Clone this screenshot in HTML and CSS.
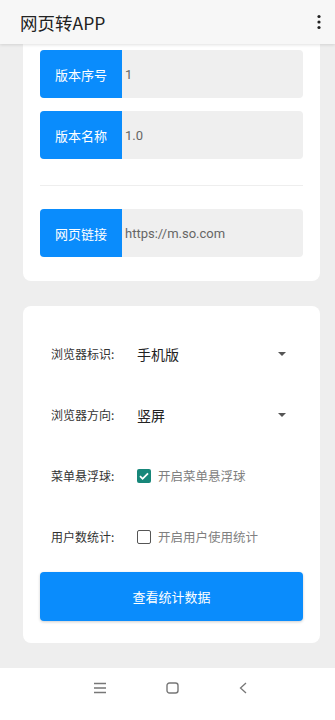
FILE: index.html
```html
<!DOCTYPE html>
<html lang="zh">
<head>
    <meta charset="UTF-8">
    <meta name="viewport" content="width=device-width, initial-scale=1.0">
    <title>网页转APP</title>
    <link rel="stylesheet" href="styles.css">
</head>
<body>
    <div class="app-bar">
        <span class="app-title">网页转APP</span>
        <span class="more">
            <svg width="4" height="16" viewBox="0 0 4 16"><circle cx="2" cy="2.5" r="1.6"/><circle cx="2" cy="8" r="1.6"/><circle cx="2" cy="13.5" r="1.6"/></svg>
        </span>
    </div>

    <div class="content">
        <div class="card card-top">
            <div class="field">
                <span class="field-label">版本序号</span>
                <span class="field-value">1</span>
            </div>
            <div class="field">
                <span class="field-label">版本名称</span>
                <span class="field-value">1.0</span>
            </div>
            <div class="divider"></div>
            <div class="field">
                <span class="field-label">网页链接</span>
                <span class="field-value">https://m.so.com</span>
            </div>
        </div>

        <div class="card card-form">
            <div class="form-row">
                <span class="form-label">浏览器标识:</span>
                <span class="select">手机版<span class="caret"></span></span>
            </div>
            <div class="form-row">
                <span class="form-label">浏览器方向:</span>
                <span class="select">竖屏<span class="caret"></span></span>
            </div>
            <div class="form-row">
                <span class="form-label">菜单悬浮球:</span>
                <label class="check">
                    <span class="box checked">
                        <svg width="14" height="14" viewBox="0 0 14 14"><path d="M3 7.2l2.6 2.6L11 4.4" fill="none" stroke="#fff" stroke-width="1.8"/></svg>
                    </span>
                    开启菜单悬浮球
                </label>
            </div>
            <div class="form-row">
                <span class="form-label">用户数统计:</span>
                <label class="check">
                    <span class="box"></span>
                    开启用户使用统计
                </label>
            </div>
            <button class="stats-btn">查看统计数据</button>
        </div>
    </div>

    <div class="nav-bar">
        <svg width="12" height="12" viewBox="0 0 12 12"><path d="M0 1.5h12M0 6h12M0 10.5h12" stroke="#777" stroke-width="1.3"/></svg>
        <svg width="13" height="12" viewBox="0 0 13 12"><rect x="1" y="1" width="11" height="10" rx="2.5" fill="none" stroke="#777" stroke-width="1.4"/></svg>
        <svg width="8" height="12" viewBox="0 0 8 12"><path d="M7 1L1.5 6L7 11" fill="none" stroke="#777" stroke-width="1.3"/></svg>
    </div>
</body>
</html>
```

FILE: styles.css
```css
* {
    box-sizing: border-box;
}
body {
    margin: 0;
    background-color: #eeeeee;
    font-family: "Noto Sans CJK SC", Roboto, sans-serif;
    color: #333;
}
.app-bar {
    position: relative;
    z-index: 2;
    height: 44px;
    background-color: #f7f7f7;
    box-shadow: 0 1px 3px rgba(0,0,0,0.12);
    display: flex;
    align-items: center;
    justify-content: space-between;
    padding: 0 14px 0 20px;
}
.app-title {
    font-size: 17.5px;
    color: #222;
}
.more svg {
    display: block;
    fill: #222;
}
.content {
    height: 624px;
    padding: 0 15px 0 23px;
}
.card {
    background-color: #fff;
    border-radius: 8px;
    width: 297px;
}
.card-top {
    border-radius: 0 0 8px 8px;
    padding: 6px 17px 24px;
}
.field {
    display: flex;
    height: 48px;
    border-radius: 4px;
    overflow: hidden;
    background-color: #efefef;
}
.field + .field {
    margin-top: 13px;
}
.field-label {
    width: 82px;
    flex-shrink: 0;
    background-color: #0a8cfc;
    color: #fff;
    font-size: 13px;
    display: flex;
    align-items: center;
    justify-content: center;
}
.field-value {
    display: flex;
    align-items: center;
    padding-left: 3px;
    font-family: Roboto, sans-serif;
    font-size: 13px;
    color: #666;
}
.divider {
    height: 1px;
    background-color: #eeeeee;
    margin: 26px 0 23px;
}
.card-form {
    margin-top: 25px;
    padding: 17px 17px 22px;
}
.form-row {
    display: flex;
    align-items: center;
    height: 61px;
    padding-left: 11px;
}
.form-label {
    width: 86px;
    font-size: 12px;
    color: #333;
}
.select {
    flex: 1;
    display: flex;
    align-items: center;
    justify-content: space-between;
    font-size: 14px;
    color: #222;
    padding-right: 17px;
}
.caret {
    width: 0;
    height: 0;
    border-left: 4px solid transparent;
    border-right: 4px solid transparent;
    border-top: 4px solid #555;
}
.check {
    display: flex;
    align-items: center;
    font-size: 12.5px;
    color: #808080;
}
.box {
    width: 14px;
    height: 14px;
    border: 1.5px solid #555;
    border-radius: 2px;
    margin-right: 7px;
    display: flex;
}
.box.checked {
    border: none;
    background-color: #17877a;
}
.stats-btn {
    display: block;
    width: 100%;
    height: 49px;
    margin-top: 5px;
    border: none;
    border-radius: 4px;
    background-color: #0a8cfc;
    color: #fff;
    font-family: "Noto Sans CJK SC", sans-serif;
    font-size: 13px;
    box-shadow: 0 1px 3px rgba(0,0,0,0.2);
}
.nav-bar {
    height: 52px;
    background-color: #fff;
    display: flex;
    justify-content: center;
    gap: 60px;
    padding: 14px 0 0 6px;
}
.nav-bar svg {
    display: block;
}
```
